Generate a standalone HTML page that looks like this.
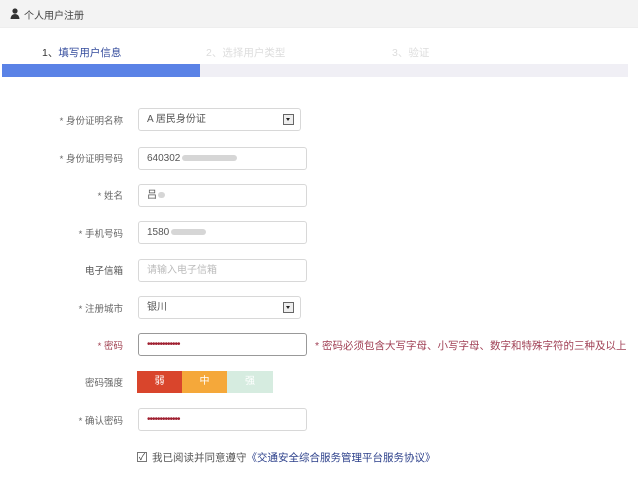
<!DOCTYPE html>
<html><head><meta charset="utf-8"><style>
*{margin:0;padding:0;box-sizing:border-box}
body{width:638px;height:477px;background:#fff;font-family:"Liberation Sans","Noto Sans CJK SC",sans-serif;font-size:11px;color:#555;position:relative;overflow:hidden}
.a{position:absolute}
.hdr{left:0;top:0;width:638px;height:28px;background:#f3f3f3;border-bottom:1px solid #eee}
.lbl{width:123px;left:0;text-align:right;font-size:9.5px;color:#666;height:16px;line-height:16px}
.in{left:138px;width:169px;height:23px;border:1px solid #d8d8d8;border-radius:3px;padding-left:8px;line-height:21px;font-size:10px;color:#555;background:#fff}
.blur{display:inline-block;height:6px;background:#ccc;border-radius:3px;vertical-align:middle;opacity:.8}
.sel{width:163px}
.arr{position:absolute;right:6px;top:5px;width:11px;height:11px;border:1px solid #666;background:#eee}
.arr:after{content:"";position:absolute;left:2px;top:3px;border:2.5px solid transparent;border-top:3px solid #222}
</style></head><body>
<div class="a hdr"></div>
<svg class="a" style="left:10px;top:8px" width="10" height="11" viewBox="0 0 10 11"><circle cx="5" cy="3" r="2.6" fill="#333"/><path d="M0.5 11 Q1 6 5 6 Q9 6 9.5 11Z" fill="#333"/></svg>
<div class="a" style="left:24px;top:7px;font-size:10px;color:#444">个人用户注册</div>
<div class="a" style="left:42px;top:45px;font-size:10.5px;color:#333">1、<span style="color:#334b9c">填写用户信息</span></div>
<div class="a" style="left:206px;top:45px;font-size:10.5px;color:#ddd">2、选择用户类型</div>
<div class="a" style="left:392px;top:45px;font-size:10.5px;color:#ddd">3、验证</div>
<div class="a" style="left:2px;top:64px;width:626px;height:13px;background:#f0eff5"></div>
<div class="a" style="left:2px;top:64px;width:198px;height:13px;background:#5a82e6"></div>

<div class="a lbl" style="top:114px">* 身份证明名称</div>
<div class="a in sel" style="top:108px">A 居民身份证<span class="arr"></span></div>
<div class="a lbl" style="top:152px">* 身份证明号码</div>
<div class="a in" style="top:147px">640302<span class="blur" style="width:55px;margin-left:2px"></span></div>
<div class="a lbl" style="top:189px">* 姓名</div>
<div class="a in" style="top:184px">吕<span class="blur" style="width:7px;margin-left:1px"></span></div>
<div class="a lbl" style="top:227px">* 手机号码</div>
<div class="a in" style="top:221px">1580<span class="blur" style="width:35px;margin-left:2px"></span></div>
<div class="a lbl" style="top:264px;color:#555">电子信箱</div>
<div class="a in" style="top:259px;color:#bbb">请输入电子信箱</div>
<div class="a lbl" style="top:302px">* 注册城市</div>
<div class="a in sel" style="top:296px">银川<span class="arr"></span></div>
<div class="a lbl" style="top:339px;color:#a04050">* 密码</div>
<div class="a in" style="top:333px;border-color:#999;letter-spacing:-1px;color:#a02030">•••••••••••••</div>
<div class="a" style="left:315px;top:338px;font-size:10.5px;color:#a04055">* 密码必须包含大写字母、小写字母、数字和特殊字符的三种及以上</div>
<div class="a lbl" style="top:376px">密码强度</div>
<div class="a" style="left:137px;top:371px;width:45px;height:22px;background:#d9452c;color:#fff;text-align:center;line-height:22px;font-size:10px">弱</div>
<div class="a" style="left:182px;top:371px;width:45px;height:22px;background:#f5a83a;color:#fff;text-align:center;line-height:22px;font-size:10px">中</div>
<div class="a" style="left:227px;top:371px;width:46px;height:22px;background:#d6ece0;color:#fff;text-align:center;line-height:22px;font-size:10px">强</div>
<div class="a lbl" style="top:414px">* 确认密码</div>
<div class="a in" style="top:408px;letter-spacing:-1px;color:#a02030">•••••••••••••</div>
<div class="a" style="left:137px;top:452px;width:10px;height:10px;border:1px solid #777;font-size:9px;line-height:8px;text-align:center;color:#333">✓</div>
<div class="a" style="left:152px;top:450px;font-size:10.5px;color:#555">我已阅读并同意遵守<span style="color:#2b3f8a">《交通安全综合服务管理平台服务协议》</span></div>
</body></html>
